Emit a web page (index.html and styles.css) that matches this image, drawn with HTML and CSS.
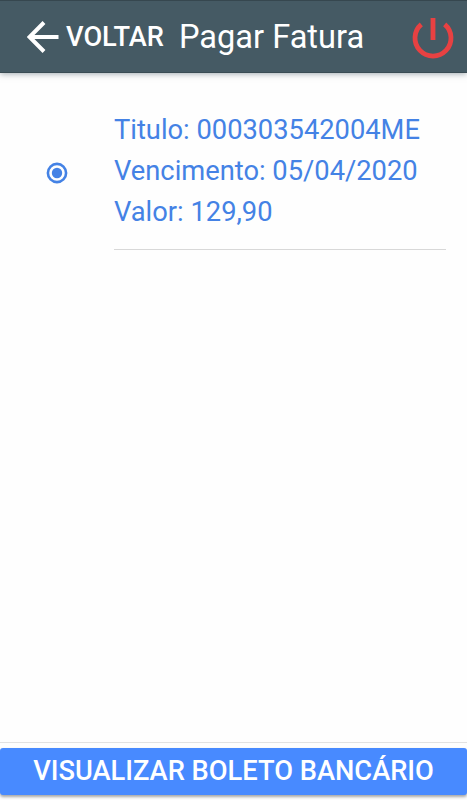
FILE: index.html
```
<!DOCTYPE html>
<html lang="pt-BR">
<head>
  <meta charset="UTF-8" />
  <meta name="viewport" content="width=device-width, initial-scale=1.0"/>
  <title>Pagar Fatura</title>
  <link rel="stylesheet" href="styles.css">
</head>
<body>
  <header>
    <button class="back-btn">
      <svg width="32" height="32" viewBox="0 0 32 32">
        <path d="M31.5 16H3M17 1.5L2.5 16L17 30.5" fill="none" stroke="currentColor" stroke-width="4"/>
      </svg>
      <span>VOLTAR</span>
    </button>
    <h1>Pagar Fatura</h1>
    <button class="logout-btn" aria-label="Sair">
      <svg width="42" height="42" viewBox="0 0 42 42">
        <path d="M21 1V23M9.3 7.4A18 18 0 1 0 32.7 7.4" fill="none" stroke="currentColor" stroke-width="4.8"/>
      </svg>
    </button>
  </header>

  <main>
    <label class="item">
      <svg class="radio" width="22" height="22" viewBox="0 0 22 22">
        <circle cx="11" cy="11" r="9.1" fill="none" stroke="currentColor" stroke-width="2.6"/>
        <circle cx="11" cy="11" r="5.2" fill="currentColor"/>
      </svg>
      <div class="info">
        <p class="titulo">Titulo: 000303542004ME</p>
        <p class="vencimento">Vencimento: 05/04/2020</p>
        <p class="valor">Valor: 129,90</p>
      </div>
    </label>
  </main>

  <footer>
    <button class="boleto-btn"><span>VISUALIZAR BOLETO BANCÁRIO</span></button>
  </footer>
</body>
</html>
```
FILE: styles.css
```
* {
  box-sizing: border-box;
}
body {
  margin: 0;
  height: 100vh;
  display: flex;
  flex-direction: column;
  font-family: Roboto, sans-serif;
  background: #fefefe;
  color: #488aff;
}
button {
  border: none;
  padding: 0;
  background: none;
  font-family: inherit;
  cursor: pointer;
}
svg {
  display: block;
}
header {
  height: 73px;
  display: flex;
  align-items: center;
  padding: 0 13px 0 27px;
  background: #455a64;
  color: #fff;
  border-top: 1px solid #36474f;
  border-bottom: 1px solid #3a4c54;
  box-shadow: 0 1px 6px rgba(69, 90, 100, 0.5);
}
.back-btn {
  display: flex;
  align-items: center;
  gap: 7px;
  color: #fff;
  font-size: 27.2px;
  font-weight: 500;
}
h1 {
  flex: 1;
  margin: 0 0 0 15px;
  font-size: 32.6px;
  font-weight: 400;
  white-space: nowrap;
}
.logout-btn {
  margin-top: 2px;
  color: #e84142;
}
main {
  flex: 1;
}
.item {
  display: flex;
  align-items: center;
  padding: 24px 21px 0 46px;
  color: #4482e5;
}
.radio {
  flex-shrink: 0;
  margin: 0 46px 2px 0;
}
.info {
  flex: 1;
  padding: 13px 0 16px;
  border-bottom: 1px solid #d8d8d8;
}
.info p {
  margin: 0;
  font-size: 27.3px;
  line-height: 41px;
  white-space: nowrap;
}
footer {
  height: 58px;
  padding-top: 5px;
  border-top: 1px solid #e2e2e2;
}
.boleto-btn {
  display: block;
  width: 100%;
  height: 47px;
  padding-bottom: 2px;
  border-radius: 3px;
  background: #488aff;
  color: #fff;
  font-size: 27.25px;
  font-weight: 500;
  box-shadow: 0 2px 3px rgba(0, 0, 0, 0.35);
}
```
